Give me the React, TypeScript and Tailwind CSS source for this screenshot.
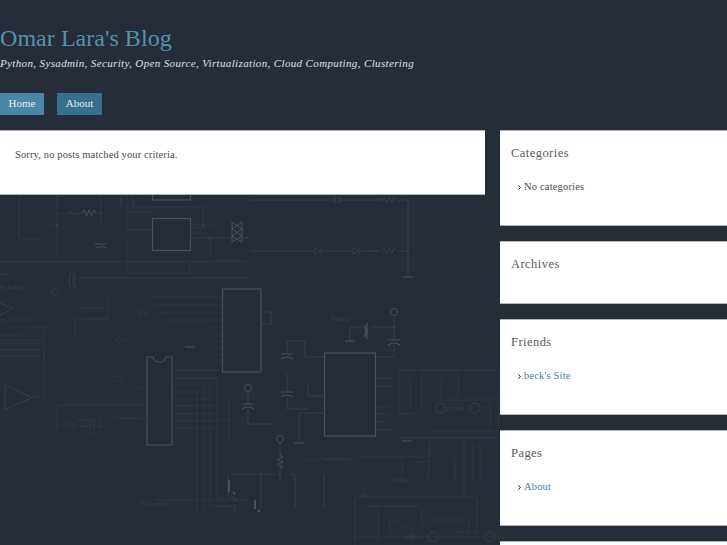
const S = "#47525e";
const M = "#37414c";
const F = "#2f3843";

function Res({ x, y, v = false, c = M }: { x: number; y: number; v?: boolean; c?: string }) {
  const d = "M0 0l2 -3l2.5 6l2.5 -6l2.5 6l2.5 -6l2 3";
  return <path d={d} transform={v ? `translate(${x},${y}) rotate(90)` : `translate(${x},${y})`} fill="none" stroke={c} />;
}
function Diode({ x, y, c = M }: { x: number; y: number; c?: string }) {
  return <path d={`M${x} ${y - 3.5}v7l6 -3.5zM${x + 6} ${y - 3.5}v7`} fill="none" stroke={c} />;
}
function Cap({ x, y, c = M }: { x: number; y: number; c?: string }) {
  return <path d={`M${x - 6} ${y}h12M${x - 6} ${y + 5}q6 -4 12 0`} fill="none" stroke={c} strokeWidth="1.2" />;
}
function Dot({ x, y, c = M }: { x: number; y: number; c?: string }) {
  return <circle cx={x} cy={y} r="1.2" fill={c} stroke="none" />;
}
function Ic({ x, y, r = 3.5, c = M }: { x: number; y: number; r?: number; c?: string }) {
  return <circle cx={x} cy={y} r={r} fill="none" stroke={c} />;
}
function Gnd({ x, y }: { x: number; y: number }) {
  return <path d={`M${x - 5} ${y}h10`} stroke={S} strokeWidth="1.2" />;
}

function Circuit() {
  return (
    <svg className="absolute left-0 top-0 z-0" width="727" height="545" viewBox="0 0 727 545" fill="none">
      <g stroke={S} strokeWidth="1.2">
        <rect x="152.500" y="180" width="38" height="20" />
        <rect x="152.500" y="218.500" width="38" height="32" />
        <rect x="222.500" y="289" width="38.500" height="83" />
        <rect x="324.500" y="353" width="51" height="83" />
        <path d="M147 357h6q1 5 6.500 5t6.500 -5h6v88h-25z" />
        <path d="M5 385l27 12.500l-27 12.500z" strokeWidth="1" stroke={M} />
        <path d="M0 303l13 5.500l-13 6.500" strokeWidth="1" stroke={M} />
      </g>
      <g stroke={F}>
        <path d="M19 195v44h22M57 195v59M57 225h-6M57 195v20M57 214h25M95 214h6M101 214v10M101 195v19" />
        <path d="M121 195v10M121 200v10M127 195v35h25M127 212h25M127 243v30h63v-14" />
        <path d="M133 195v12h70v20M190 225h23M190 238h58M190 228h16M190 233h16M210 238v23h37" />
        <path d="M0 262h250M72 278h180M0 274h10M75 275v15" />
      </g>
      <g stroke={F}>
        <path d="M153 297h69M156 305h66M158 313h64M162 320h60M212 327h10M212 334h10M212 341h10M212 348h10M212 355h10M212 362h10" />
        <path d="M108 297v22M78 308h30M75 319h33M75 319v20M108 318h-20" />
        <path d="M44 327h-30M44 327v70H32M44 340h-44M44 353v5M0 320h36M0 343h44" />
        <path d="M0 350h44M0 356h44M0 335h20" />
        <path d="M57 405h90M57 405v30M147 372h-6M147 380h-6M147 388h-8M147 397h-6M147 412h-6M147 420h-6M147 428h-6M147 436h-6" />
        <path d="M57 426h50M78 420h20M115 418h32" />
      </g>
      <g stroke={F}>
        <path d="M172 370h50M172 378h46M172 385h26M172 392h32M172 399h38M172 406h46M172 414h44M172 421h44M172 428h44M172 436h6" />
        <path d="M197 392v120M204 385v127M210 385v126M217 378v120h18" />
        <path d="M229 400h-10M229 400v40h-10M229 420h-12" />
        <path d="M155 500h95M210 506h25" />
      </g>
      <g stroke={M}>
        <path d="M261 324h10v-12h-10" />
        <path d="M250 200h85M342 200h40M397 200h11v77" />
        <path d="M250 251h65M322 251h31M360 251h22M397 251h11" />
        <path d="M350 341v-14h12M370 327h25M394 317v23M394 345v12h-18" />
        <path d="M287 354v-13h18v16h19M287 392v-18M287 397v12h22M308 396h17M308 396v-12" />
        <path d="M248 392v12M248 409v15M248 424h25" />
        <path d="M299 443v-30h26" />
        <path d="M280 443v12M280 470v12M231 474h44M261 474v34M295 474v34M324 474v34" />
        <path d="M228 474v22M236 500l-6 -4M235 505v8" />
      </g>
      <g stroke={F}>
        <path d="M376 378h20M376 386h16M376 430h20M376 422h10M376 414h14M376 407h14" />
        <path d="M399 370h99v61h-66M399 370v44h20M419 370h6M458 370v30M440 400h60M490 400v32" />
        <path d="M410 379v30M422 370v45M441 380v20" />
        <path d="M398 438h102M430 437v20M430 457h-70M464 437v60M454 457v22M429 445v30M402 452v30M428 462h-15" />
        <path d="M428 470v12M473 445v36M480 445v36M455 462v20" />
        <path d="M355 497h122v35h-24M355 497v60M355 537h145M368 506h54v20M378 506v36M410 526h-8M412 527v15M400 522h-5" />
        <path d="M429 520h40v15M425 537h-15M390 520v15" />
      </g>
      <g stroke={S}>
        <Res x={82} y={213} c={S} />
        <Res x={382} y={200} />
        <Res x={382} y={251} />
        <Diode x={335} y={200} />
        <Diode x={315} y={251} />
        <Diode x={353} y={251} />
        <path d="M232 222l10 7M242 222l-10 7M232 229l10 7M242 229l-10 7M232 236l10 6M242 236l-10 6M232 222v20M242 222v20" />
        <path d="M95 244h12M96 248q5 -3 11 0" />
        <path d="M75 272q-4 8 0 17M71 272q-4 8 0 17" stroke={M} />
        <Gnd x={408} y={277} />
        <Gnd x={190} y={347} />
        <Gnd x={350} y={341} />
        <Gnd x={407} y={441} />
        <Gnd x={299} y={443} />
        <Ic x={394} y={312} c={S} />
        <Ic x={280} y={439} c={S} />
        <Ic x={248} y={388} c={S} />
        <Res x={280} y={455} v c={S} />
        <path d="M364 325q4 7 0 12M367 323v16" strokeWidth="1.3" />
        <Cap x={394} y={340} c={S} />
        <Cap x={287} y={354} c={S} />
        <Cap x={287} y={392} c={S} />
        <Cap x={248} y={404} c={S} />
        <path d="M229 480v12M233 492l2 2" strokeWidth="2" />
        <path d="M255 500v9M258 510l2 2" strokeWidth="2" />
      </g>
      <g stroke={F}>
        <Ic x={55} y={292} c={F} />
        <Ic x={440} y={408} r={5} c={M} />
        <Ic x={475} y={408} r={5} c={M} />
        <Ic x={433} y={537} r={5} c={M} />
        <Ic x={490} y={537} r={5} c={M} />
        <Cap x={70} y={424} c={F} />
        <Cap x={117} y={377} c={F} />
        <Res x={115} y={341} c={F} />
        <Diode x={140} y={313} c={F} />
        <path d="M90 420v14M94 420v14M100 418v16" />
      </g>
      <Dot x={121} y={200} c={M} />
      <Dot x={70} y={213} c={M} />
      <Dot x={101} y={213} c={M} />
      <Dot x={57} y={225} c={M} />
      <Dot x={203} y={225} c={M} />
      <Dot x={210} y={238} c={M} />
      <Dot x={247} y={238} c={M} />
      <Dot x={376} y={251} c={M} />
      <Dot x={408} y={251} c={M} />
      <Dot x={395} y={327} c={M} />
      <Dot x={44} y={327} c={F} />
      <Dot x={44} y={340} c={F} />
      <Dot x={44} y={353} c={F} />
      <Dot x={261} y={474} c={M} />
      <Dot x={280} y={474} c={M} />
      <Dot x={292} y={474} c={M} />
      <Dot x={235} y={500} c={M} />
      <g fill="#37414c" fontFamily="Liberation Sans, sans-serif" fontSize="5">
        <text x="331" y="321">MAX232</text>
        <text x="140" y="506" fontSize="6">Tx Enable</text>
        <text x="305" y="461" fontSize="6">Input Transformer</text>
        <text x="446" y="411">2N3904</text>
        <text x="404" y="539">2N3904</text>
        <text x="0" y="289">Rx Enable</text>
        <text x="392" y="482">1N4001</text>
        <text x="360" y="498">+5V</text>
      </g>
    </svg>
  );
}

function Widget({ title, children, h }: { title?: string; children?: React.ReactNode; h: string }) {
  return (
    <section className={`border-y border-[#aeb4ba] bg-white pl-[11px] pt-[14px] ${h}`}>
      {title && <h3 className="text-[12.5px] leading-[16px] tracking-[0.45px] text-[#5a5a5a]">{title}</h3>}
      {children}
    </section>
  );
}

function Item({ children, link }: { children: React.ReactNode; link?: boolean }) {
  return (
    <div className={`mt-[18px] flex items-center pl-[7px] text-[10.5px] leading-[16px] tracking-[0.17px] ${link ? "text-[#47809b]" : "text-[#4a4a4a]"}`}>
      <svg className="mr-[3px] shrink-0" width="3" height="5" viewBox="0 0 3 5" fill="none">
        <path d="M0.300 0.500L2.500 2.500L0.300 4.500" stroke="#222" />
      </svg>
      {children}
    </div>
  );
}

export default function App() {
  return (
    <div className="relative h-[545px] w-[727px] overflow-hidden bg-[#252d38] font-['Liberation_Serif',serif]">
      <Circuit />
      <div className="relative z-10">
        <header className="h-[130px] pt-[23px]">
          <h1 className="text-[24px] leading-[30px] tracking-[0.05px] text-[#5493b1]">Omar Lara's Blog</h1>
          <p className="mt-[1px] text-[11px] italic leading-[18px] tracking-[0.36px] text-[#dfe2e5]">
            Python, Sysadmin, Security, Open Source, Virtualization, Cloud Computing, Clustering
          </p>
          <nav className="mt-[21px] flex gap-[13px] text-[11px] text-[#e8edf0]">
            <a className="flex h-[22px] w-[44px] items-center justify-center bg-[#4887a6] pb-[2px]">Home</a>
            <a className="flex h-[22px] w-[45px] items-center justify-center bg-[#386f8c] pb-[2px]">About</a>
          </nav>
        </header>
        <div className="flex items-start gap-[15px]">
          <main className="h-[65px] w-[485px] border-y border-[#aeb4ba] bg-white pl-[15px] pt-[17px] text-[10.5px] leading-[14px] tracking-[0.13px] text-[#4a4a4a]">
            Sorry, no posts matched your criteria.
          </main>
          <aside className="flex w-[227px] flex-col gap-[15px]">
            <Widget title="Categories" h="h-[96px]">
              <Item>No categories</Item>
            </Widget>
            <Widget title="Archives" h="h-[63px]" />
            <Widget title="Friends" h="h-[96px]">
              <Item link>beck's Site</Item>
            </Widget>
            <Widget title="Pages" h="h-[96px]">
              <Item link>About</Item>
            </Widget>
            <Widget h="h-[96px]" />
          </aside>
        </div>
      </div>
    </div>
  );
}
